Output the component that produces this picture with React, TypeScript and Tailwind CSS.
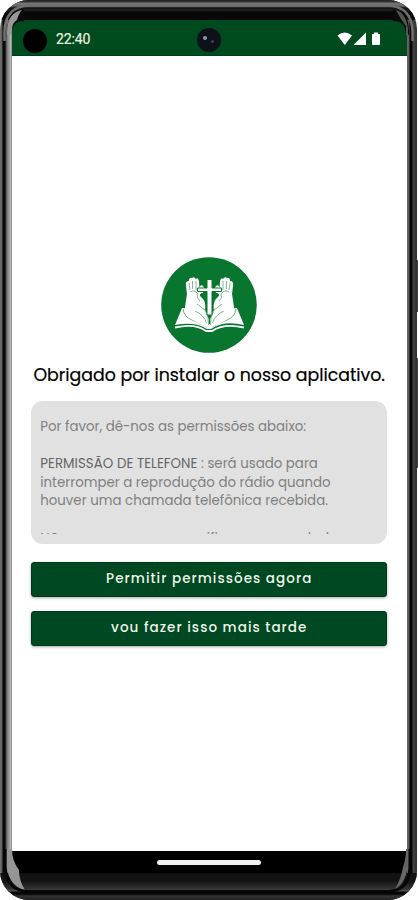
import type { ReactNode } from "react";

const font = "font-[Poppins,Inter,'Open_Sans',sans-serif]";

function StatusBar() {
  return (
    <div className="relative flex h-9 shrink-0 items-center rounded-t-[11px] border-b border-[#003d18] bg-[#004a20] pl-[11px] pr-[26px] text-white">
      <span className="mt-1.5 h-6 w-6 rounded-full bg-black" />
      <span className="ml-[9px] mt-[3px] font-[Roboto,sans-serif] text-[14px] leading-none tracking-[-0.1px] text-[#e9f2df] [-webkit-text-stroke:0.2px_#e9f2df]">
        22:40
      </span>
      <span className="absolute left-[185px] top-2 block h-6 w-6 rounded-full bg-[#0d1118]">
        <span className="absolute left-1.5 top-2 block h-1 w-1 rounded-full bg-[#9298a8] blur-[0.7px]" />
        <span className="absolute left-3.5 top-3 block h-[3px] w-[3px] rounded-full bg-[#35436e] blur-[0.5px]" />
      </span>
      <svg viewBox="0 0 44 14" className="ml-auto mt-[3px] h-3.5 w-11" fill="currentColor">
        <path d="M.5 3.500Q7.500-2.500 15 3.500L7.800 13Z" />
        <path d="M29 .5V13H16.500Z" />
        <path d="M37 .5h4V2h1.200q.8 0 .8.8V12q0 1-1 1h-6q-1 0-1-1V2.800q0-.8.8-.8H37Z" />
      </svg>
    </div>
  );
}

function Hand() {
  return (
    <>
      <path
        d="M47 69C48 62 47 57 44 53C45 48 44 43 40 40C38 38 39 36 42 36L43 31Q42 27 39 29L38.500 32L38 24Q37 20 35 22Q33 19 31 21Q28 20 28 24Q24 24 25 29L26 37Q25 43 24 50C24 58 29 63 46 70Z"
        fill="#fff"
      />
      <path
        d="M31.500 24V32M35 24V33M28 26L29 33M29 35Q33 32 37 37M37 37Q35 41 39 44M44 53Q40 50 36 47M44 53Q48 60 47.500 68M34 54Q43 58 45.500 66"
        fill="none"
        stroke="#4c9c67"
        strokeWidth="0.7"
      />
    </>
  );
}

function Logo() {
  return (
    <svg viewBox="0 0 96 96" className="h-24 w-24 shrink-0">
      <circle cx="48" cy="48" r="47.800" fill="#08762f" />
      {/* open book */}
      <path
        d="M21 51Q34 50 48 62Q62 50 76 51L83 68Q63 63 50 72H46Q34 64 14 68Z"
        fill="#fff"
      />
      <path
        d="M14 70.500Q34 66 45 74H51Q63 66 83 70.500"
        fill="none"
        stroke="#fff"
        strokeWidth="1.800"
      />
      <path
        d="M22 52Q23 60 31 63T46 70M75 52Q74 60 66 63T51 70"
        fill="none"
        stroke="#4c9c67"
        strokeWidth="0.800"
      />
      <Hand />
      <g transform="translate(97 0) scale(-1 1)">
        <Hand />
      </g>
      {/* cross */}
      <path
        d="M46 22.500H51V31H60.500V34.500H51V58H46V34.500H36.500V31H46Z"
        fill="#fff"
        stroke="#08762f"
        strokeWidth="1"
      />
      <path d="M48.500 60V67" stroke="#08762f" strokeWidth="1.200" />
    </svg>
  );
}

function ActionButton({ children }: { children: ReactNode }) {
  return (
    <button
      type="button"
      className="flex h-[35px] w-full items-center justify-center whitespace-nowrap rounded-[3px] border border-[#00391a] bg-[#004822] text-[13.5px] font-medium tracking-[1.05px] text-[#eef5e9] shadow-[0_1px_3px_rgba(0,0,0,0.35)]"
    >
      {children}
    </button>
  );
}

function PermissionScreen() {
  return (
    <main className={`flex min-h-0 flex-1 flex-col items-center bg-white px-5 pt-[201px] ${font}`}>
      <Logo />
      <h1 className="mt-2.5 h-6 whitespace-nowrap text-[17.35px] leading-6 text-black [-webkit-text-stroke:0.2px_black]">
        Obrigado por instalar o nosso aplicativo.
      </h1>
      <section className="mt-3.5 h-[143px] w-[356px] shrink-0 rounded-xl bg-[#e1e1e1] pl-[9px] pr-2.5 pt-[17px]">
        <div className="h-[116px] overflow-hidden whitespace-nowrap text-[13.35px] leading-[18.6px] text-[#808080]">
          <p>Por favor, dê-nos as permissões abaixo:</p>
          <p className="mt-[18.6px]">
            <span className="tracking-[0.05px] text-[#666]">PERMISSÃO DE TELEFONE</span> : será usado para
          </p>
          <p>interromper a reprodução do rádio quando</p>
          <p>houver uma chamada telefônica recebida.</p>
          <p className="mt-[18.6px]">Não acessamos nem verificamos seus dados.</p>
        </div>
      </section>
      <div className="mt-[18px] flex w-[356px] flex-col gap-3.5">
        <ActionButton>Permitir permissões agora</ActionButton>
        <ActionButton>vou fazer isso mais tarde</ActionButton>
      </div>
    </main>
  );
}

// Rounded bezel corners with their reflections
function BezelCorners() {
  return (
    <svg viewBox="0 0 418 900" className="pointer-events-none absolute inset-0 h-full w-full">
      <path d="M12 32Q12 20 24 20V8Q7 10 7 30V34H12Z" fill="#0c0c0c" />
      <path d="M12 34V29Q12 22 17 19Q19 12 22 9Q7 12 7 31V34Z" fill="#999" />
      <path d="M406.500 32Q406.500 20 394 20V8Q410 10 410 30V34Z" fill="#0c0c0c" />
      <path d="M397 9Q402 19 407 25V34H409V28Q407 12 397 9Z" fill="#555" />
      <path d="M7 850V868Q9 887 25 891Q19 882 19 871Q12 862 12 850Z" fill="#969696" />
      <path d="M409 850V866Q407 884 396 890Q402 880 404 868Q407 860 407 850Z" fill="#666" />
      {/* outer rim */}
      <path
        d="M4.500 40V31Q5 5 30 4.500H388Q413 5 413.500 31V40"
        fill="none"
        stroke="#707070"
        strokeWidth="2.500"
      />
      <path
        d="M5 850V868Q7 892 28 892.500H389Q410 892 411 868V850"
        fill="none"
        stroke="#060606"
        strokeWidth="3"
      />
    </svg>
  );
}

export default function App() {
  return (
    <div className="relative h-[900px] w-[418px] overflow-hidden bg-white">
      {/* side keys */}
      <span className="absolute left-[415px] top-[260px] h-[52px] w-[3px] bg-[#444]" />
      <span className="absolute left-[415px] top-[358px] h-[110px] w-[3px] bg-[#444]" />
      <div className="relative h-full w-[417px] overflow-hidden rounded-[29px] bg-[linear-gradient(90deg,#777_0px,#555_2px,#080808_3px,#080808_5px,#444_6px,#777_7px,#999_9px,#bbb_11px,#777_12px,#111_13px,#111_406px,#666_407px,#5a5a5a_409px,#050505_410px,#050505_412px,#444_413px,#333_416px)]">
        <div className="flex h-full flex-col">
          <div className="h-5 shrink-0 bg-[linear-gradient(180deg,#222_0px,#333_2px,#777_3px,#666_6px,#111_8px,#222_10px,#080808_12px,#080808_20px)]" />
          <div className="flex min-h-0 flex-1 flex-col pl-3 pr-[10.5px]">
            <StatusBar />
            <PermissionScreen />
            <div className="flex h-[22px] shrink-0 items-start justify-center bg-black pt-[9px]">
              <span className="h-[5px] w-[104px] rounded-full bg-[#eee]" />
            </div>
          </div>
          <div className="h-[27px] shrink-0 bg-[linear-gradient(180deg,#111_0px,#141414_8px,#333_16px,#555_18px,#050505_19px,#050505_21px,#333_23px,#222_27px)]" />
        </div>
        <BezelCorners />
      </div>
    </div>
  );
}
